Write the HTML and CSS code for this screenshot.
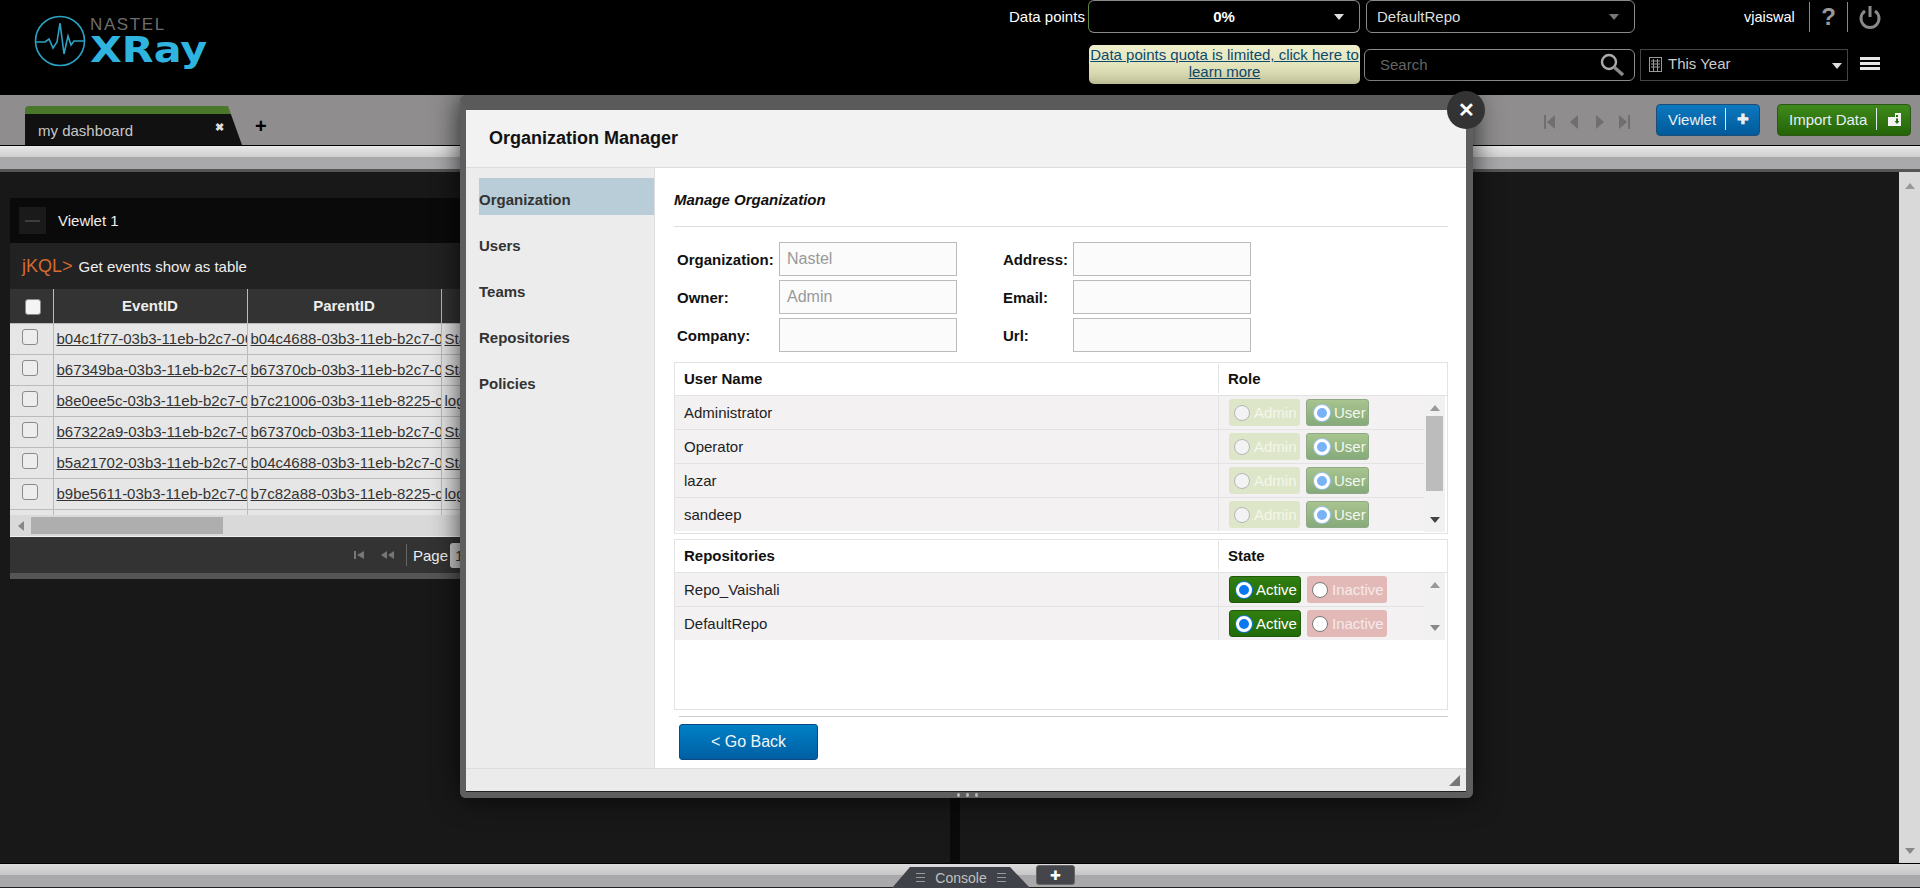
FILE: index.html
```html
<!DOCTYPE html>
<html lang="en">
<head>
    <meta charset="UTF-8" />
    <title>Nastel XRay</title>
    <link rel="stylesheet" href="styles.css">
</head>
<body>

<header class="topbar">
    <div class="logo">
        <svg class="logo-mark" width="52" height="52" viewBox="0 0 52 52">
            <circle cx="26" cy="26" r="24.5" fill="none" stroke="#2aa3c4" stroke-width="1.6"/>
            <path d="M2 27 H11 L15 24 L19 33 L23 27 L26 8 L30 39 L34 21 L37 30 L40 26 H50" fill="none" stroke="#2aa3c4" stroke-width="1.6"/>
        </svg>
        <div class="logo-text">
            <div class="logo-nastel">NASTEL</div>
            <div class="logo-xray">XRay</div>
        </div>
    </div>

    <div class="top-right">
        <div class="top-row">
            <span class="dp-label">Data points</span>
            <div class="drop dp-drop"><b>0%</b><i class="caret caret-white"></i></div>
            <div class="drop repo-drop"><span>DefaultRepo</span><i class="caret caret-gray"></i></div>
            <span class="username">vjaiswal</span>
            <span class="sep"></span>
            <span class="help">?</span>
            <span class="sep"></span>
            <svg class="power" width="24" height="24" viewBox="0 0 24 24">
                <path d="M7 6 A9 9 0 1 0 17 6" fill="none" stroke="#8a8a8a" stroke-width="3"/>
                <path d="M12 1 V12" stroke="#8a8a8a" stroke-width="3"/>
            </svg>
        </div>
        <div class="top-row second">
            <a class="quota">Data points quota is limited, click here to learn more</a>
            <div class="search">
                <span>Search</span>
                <svg width="26" height="24" viewBox="0 0 26 24">
                    <circle cx="10" cy="9" r="7" fill="none" stroke="#aaa" stroke-width="2.4"/>
                    <path d="M15 14 L24 22" stroke="#8a8a8a" stroke-width="3.4"/>
                </svg>
            </div>
            <div class="year">
                <svg width="13" height="16" viewBox="0 0 13 16">
                    <rect x="0.5" y="1.5" width="12" height="14" fill="none" stroke="#999"/>
                    <path d="M2 5 H11 M2 8 H11 M2 11 H11 M4.5 3 V15 M8.5 3 V15" stroke="#999"/>
                </svg>
                <span>This Year</span>
                <i class="caret caret-white"></i>
            </div>
            <div class="burger"><i></i><i></i><i></i></div>
        </div>
    </div>
</header>

<nav class="tabbar">
    <div class="tab">
        <span>my dashboard</span>
        <b class="tab-close">&#10006;</b>
    </div>
    <b class="tab-add">+</b>
    <div class="tab-tools">
        <svg class="pager-arrows" width="86" height="16" viewBox="0 0 86 16" fill="#6f6f6f">
            <path d="M0 1 H2 V15 H0 Z M11 1 V15 L3 8 Z"/>
            <path d="M34 1 V15 L26 8 Z"/>
            <path d="M52 1 V15 L60 8 Z"/>
            <path d="M75 1 V15 L83 8 Z M84 1 H86 V15 H84 Z"/>
        </svg>
        <button class="tool-btn blue">Viewlet<i></i><b>&#10010;</b></button>
        <button class="tool-btn green">Import Data<i></i>
            <svg width="13" height="13" viewBox="0 0 13 13">
                <path d="M0 4 H7 V0 H13 V13 H0 Z" fill="#f2f2f2"/>
                <path d="M8 2 H10 V4 H8 Z M8 5.5 H10 V8 H11.5 L9 11 L6.5 8 H8 Z" fill="#2a6a10"/>
            </svg>
        </button>
    </div>
</nav>
<div class="strip"></div>

<main class="workspace">
    <section class="left-pane">
        <div class="viewlet">
            <div class="viewlet-title">
                <span class="collapse"><i></i></span>
                <span>Viewlet 1</span>
            </div>
            <div class="jkql"><em>jKQL&gt;</em> Get events show as table</div>
            <div class="table-wrap">
                <table class="events">
                    <thead>
                    <tr>
                        <th class="chk"><span class="box box-head"></span></th>
                        <th>EventID</th>
                        <th>ParentID</th>
                        <th>Name</th>
                    </tr>
                    </thead>
                    <tbody>
                    <tr><td class="chk"><span class="box"></span></td><td><a>b04c1f77-03b3-11eb-b2c7-0610a1d4e2c8</a></td><td><a>b04c4688-03b3-11eb-b2c7-0610a1d4e2c8</a></td><td><a>Start</a></td></tr>
                    <tr><td class="chk"><span class="box"></span></td><td><a>b67349ba-03b3-11eb-b2c7-0610a1d4e2c8</a></td><td><a>b67370cb-03b3-11eb-b2c7-0610a1d4e2c8</a></td><td><a>Start</a></td></tr>
                    <tr><td class="chk"><span class="box"></span></td><td><a>b8e0ee5c-03b3-11eb-b2c7-0610a1d4e2c8</a></td><td><a>b7c21006-03b3-11eb-8225-c2f1a7d0b3e4</a></td><td><a>log</a></td></tr>
                    <tr><td class="chk"><span class="box"></span></td><td><a>b67322a9-03b3-11eb-b2c7-0610a1d4e2c8</a></td><td><a>b67370cb-03b3-11eb-b2c7-0610a1d4e2c8</a></td><td><a>Start</a></td></tr>
                    <tr><td class="chk"><span class="box"></span></td><td><a>b5a21702-03b3-11eb-b2c7-0610a1d4e2c8</a></td><td><a>b04c4688-03b3-11eb-b2c7-0610a1d4e2c8</a></td><td><a>Start</a></td></tr>
                    <tr><td class="chk"><span class="box"></span></td><td><a>b9be5611-03b3-11eb-b2c7-0610a1d4e2c8</a></td><td><a>b7c82a88-03b3-11eb-8225-c2f1a7d0b3e4</a></td><td><a>log</a></td></tr>
                    <tr><td class="chk"></td><td></td><td></td><td></td></tr>
                    </tbody>
                </table>
            </div>
            <div class="hscroll"><i class="arrow-left"></i><span class="hthumb"></span></div>
            <div class="pager">
                <svg width="40" height="10" viewBox="0 0 40 10" fill="#777">
                    <path d="M0 1 H2 V9 H0 Z M10 1 V9 L3 5 Z"/>
                    <path d="M33 1 V9 L27 5 Z M40 1 V9 L34 5 Z"/>
                </svg>
                <span class="pager-sep"></span>
                <span>Page</span>
                <span class="page-input">1</span>
            </div>
        </div>
    </section>
    <div class="splitter"></div>
    <section class="right-pane"></section>
    <div class="vscroll"><i class="arrow-up"></i><i class="arrow-down"></i></div>
</main>

<footer class="bottombar">
    <div class="console-tab"><span class="lines"></span><span>Console</span><span class="lines"></span></div>
    <button class="console-add">&#10010;</button>
</footer>

<div class="modal">
    <b class="modal-close">&#10005;</b>
    <div class="modal-head">Organization Manager</div>
    <div class="modal-body">
        <ul class="side">
            <li class="active">Organization</li>
            <li>Users</li>
            <li>Teams</li>
            <li>Repositories</li>
            <li>Policies</li>
        </ul>
        <div class="content">
            <h3>Manage Organization</h3>
            <div class="org-form">
                <label>Organization:</label><div class="field">Nastel</div>
                <label>Address:</label><div class="field"></div>
                <label>Owner:</label><div class="field">Admin</div>
                <label>Email:</label><div class="field"></div>
                <label>Company:</label><div class="field"></div>
                <label>Url:</label><div class="field"></div>
            </div>

            <div class="grid">
                <div class="grid-head"><span>User Name</span><span>Role</span></div>
                <div class="grid-body">
                    <div class="grid-rows">
                        <div class="grid-row"><span>Administrator</span><span class="pills"><span class="pill admin"><i class="radio off"></i>Admin</span><span class="pill user"><i class="radio on faded"></i>User</span></span></div>
                        <div class="grid-row"><span>Operator</span><span class="pills"><span class="pill admin"><i class="radio off"></i>Admin</span><span class="pill user"><i class="radio on faded"></i>User</span></span></div>
                        <div class="grid-row"><span>lazar</span><span class="pills"><span class="pill admin"><i class="radio off"></i>Admin</span><span class="pill user"><i class="radio on faded"></i>User</span></span></div>
                        <div class="grid-row"><span>sandeep</span><span class="pills"><span class="pill admin"><i class="radio off"></i>Admin</span><span class="pill user"><i class="radio on faded"></i>User</span></span></div>
                    </div>
                    <div class="grid-scroll"><i class="arrow-up"></i><span class="thumb"></span><i class="arrow-down dark"></i></div>
                </div>
            </div>

            <div class="grid repos">
                <div class="grid-head"><span>Repositories</span><span>State</span></div>
                <div class="grid-body">
                    <div class="grid-rows">
                        <div class="grid-row"><span>Repo_Vaishali</span><span class="pills"><span class="pill on-state"><i class="radio on"></i>Active</span><span class="pill off-state"><i class="radio off white"></i>Inactive</span></span></div>
                        <div class="grid-row"><span>DefaultRepo</span><span class="pills"><span class="pill on-state"><i class="radio on"></i>Active</span><span class="pill off-state"><i class="radio off white"></i>Inactive</span></span></div>
                    </div>
                    <div class="grid-scroll short"><i class="arrow-up"></i><i class="arrow-down"></i></div>
                </div>
            </div>

            <div class="actions">
                <button class="back">&lt; Go Back</button>
            </div>
        </div>
    </div>
    <div class="modal-foot">
        <svg width="11" height="11" viewBox="0 0 11 11"><path d="M0 11 L11 0 V11 Z" fill="#777"/></svg>
    </div>
</div>
<div class="dots"><i></i><i></i><i></i></div>

</body>
</html>
```

FILE: styles.css
```css
* {
    box-sizing: border-box;
}
html, body {
    margin: 0;
    height: 888px;
    overflow: hidden;
}
body {
    font-family: "Liberation Sans", Arial, sans-serif;
    font-size: 15px;
    background-color: #181818;
    display: flex;
    flex-direction: column;
}

/* top header */
.topbar {
    height: 95px;
    flex: none;
    background-color: #000;
    display: flex;
    justify-content: space-between;
    color: #fff;
}
.logo {
    display: flex;
    padding: 15px 0 0 34px;
}
.logo-mark {
    margin-right: 4px;
}
.logo-text {
    padding-top: 1px;
}
.logo-nastel {
    color: #6d6d6d;
    font-size: 17px;
    letter-spacing: 1.6px;
    line-height: 18px;
}
.logo-xray {
    color: #2fb4e0;
    font-family: "DejaVu Sans", sans-serif;
    font-weight: bold;
    font-size: 35px;
    line-height: 35px;
    margin-top: -1px;
    transform: scaleX(1.18);
    transform-origin: left center;
}
.top-right {
    width: 911px;
}
.top-row {
    display: flex;
    align-items: center;
    height: 33px;
}
.second {
    height: 39px;
    margin-top: 12px;
    padding-left: 80px;
}
.dp-label {
    width: 79px;
}
.drop {
    height: 33px;
    border: 1px solid #8a8a8a;
    border-radius: 6px;
    display: flex;
    align-items: center;
    position: relative;
}
.dp-drop {
    width: 272px;
    justify-content: center;
    border-left-color: #5d8a3c;
    margin-right: 6px;
}
.repo-drop {
    width: 269px;
    padding-left: 10px;
    color: #ddd;
}
.caret {
    position: absolute;
    right: 15px;
    top: 13px;
    border-left: 5px solid transparent;
    border-right: 5px solid transparent;
    border-top: 6px solid #ddd;
}
.caret-gray {
    border-top-color: #777;
}
.username {
    margin-left: 109px;
    width: 65px;
    font-size: 14.5px;
}
.sep {
    width: 1px;
    height: 30px;
    background-color: #888;
}
.help {
    width: 37px;
    text-align: center;
    color: #999;
    font-size: 24px;
    font-weight: bold;
}
.power {
    margin-left: 10px;
}
.quota {
    width: 271px;
    height: 39px;
    background: linear-gradient(#eeeecb, #dcdcb0);
    border-radius: 5px;
    color: #0b4a6e;
    text-decoration: underline;
    text-align: center;
    line-height: 17px;
    padding-top: 1px;
    margin-right: 4px;
}
.search {
    width: 271px;
    height: 32px;
    border: 1px solid #8a8a8a;
    border-radius: 6px;
    padding: 0 9px 0 15px;
    color: #666;
    display: flex;
    align-items: center;
    justify-content: space-between;
    margin-right: 5px;
}
.year {
    width: 208px;
    height: 32px;
    border: 1px solid #444;
    padding: 0 0 2px 8px;
    color: #ccc;
    display: flex;
    align-items: center;
    position: relative;
    margin-right: 12px;
}
.year span {
    margin-left: 6px;
}
.year .caret {
    right: 5px;
    top: 13px;
}
.burger {
    width: 20px;
}
.burger i {
    display: block;
    height: 3px;
    background-color: #e6e6e6;
    margin-bottom: 2px;
}

/* tab bar */
.tabbar {
    height: 51px;
    flex: none;
    background-color: #8f8d8d;
    border-bottom: 1px solid #000;
    display: flex;
    align-items: flex-end;
    padding-left: 25px;
}
.tab {
    width: 217px;
    height: 39px;
    background: linear-gradient(#4a7729 8px, #111 8px);
    clip-path: polygon(0 0, 203px 0, 100% 100%, 0 100%);
    border-radius: 4px 0 0 0;
    color: #c8c8c8;
    padding: 16px 0 0 13px;
    position: relative;
}
.tab-close {
    position: absolute;
    left: 190px;
    top: 15px;
    font-size: 11px;
    color: #ddd;
}
.tab-add {
    font-size: 20px;
    line-height: 20px;
    color: #000;
    margin: 0 0 9px 13px;
}
.tab-tools {
    margin-left: auto;
    padding-right: 9px;
    display: flex;
    align-items: center;
    align-self: flex-start;
    padding-top: 9px;
}
.pager-arrows {
    margin-right: 26px;
    margin-top: 4px;
}
.tool-btn {
    height: 32px;
    border-radius: 4px;
    color: #e8f0f4;
    font: 15px "Liberation Sans", Arial, sans-serif;
    display: flex;
    align-items: center;
    padding: 0 0 2px 11px;
}
.tool-btn i {
    width: 1px;
    height: 22px;
    background-color: #dfe9ee;
    margin: 0 11px 0 9px;
}
.tool-btn b {
    font-size: 14px;
}
.blue {
    width: 104px;
    background: linear-gradient(#0d78bf, #005a9a);
    border: 1px solid #1c4d78;
    margin-right: 17px;
}
.green {
    width: 134px;
    background: linear-gradient(#3f8a1a, #246408);
    border: 1px solid #2c5518;
}
.strip {
    height: 26px;
    flex: none;
    background: linear-gradient(#e8e8e8, #cfcfcf 11px, #a9a9ab 11px, #a9a9ab 23px, #555 23px);
}

/* main area */
.workspace {
    flex: 1;
    display: flex;
    min-height: 0;
}
.left-pane {
    width: 950px;
    padding: 26px 5px 0 10px;
}
.splitter {
    width: 10px;
    background-color: #0a0a0a;
}
.right-pane {
    flex: 1;
}
.vscroll {
    width: 21px;
    background-color: #d9d9d9;
    display: flex;
    flex-direction: column;
    justify-content: space-between;
    align-items: center;
    padding: 11px 0 9px;
}
.arrow-up, .arrow-down {
    display: block;
    border-left: 5px solid transparent;
    border-right: 5px solid transparent;
}
.arrow-up {
    border-bottom: 6px solid #999;
}
.arrow-down {
    border-top: 6px solid #888;
}
.arrow-down.dark {
    border-top-color: #444;
}

/* viewlet */
.viewlet {
    border-bottom: 6px solid #555;
}
.viewlet-title {
    height: 45px;
    background-color: #0a0a0a;
    color: #eee;
    display: flex;
    align-items: center;
    padding-left: 9px;
}
.collapse {
    width: 27px;
    height: 27px;
    background-color: #1a1a1a;
    margin-right: 12px;
    display: flex;
    align-items: center;
    justify-content: center;
}
.collapse i {
    width: 15px;
    height: 2px;
    background-color: #3d3d3d;
}
.jkql {
    height: 46px;
    background-color: #222;
    color: #eee;
    padding-left: 12px;
    display: flex;
    align-items: center;
}
.jkql em {
    font-style: normal;
    font-size: 18px;
    color: #d66a2f;
    margin-right: 6px;
}
.table-wrap {
    height: 226px;
    overflow: hidden;
    background-color: #e6e6e6;
}
.events {
    table-layout: fixed;
    border-collapse: collapse;
    width: 930px;
}
.events th {
    height: 34px;
    background-color: #333;
    color: #eee;
    border-right: 1px solid #bbb;
}
.events td {
    height: 31px;
    padding: 0 0 1px 3px;
    border-top: 1px solid #bbb;
    border-right: 1px solid #bbb;
    white-space: nowrap;
    overflow: hidden;
    color: #333;
}
.events th:nth-child(1) {
    width: 43px;
}
.events th:nth-child(2), .events th:nth-child(3) {
    width: 194px;
}
.events td.chk {
    text-align: center;
    padding: 0 3px 0 0;
}
.events a {
    text-decoration: underline;
}
.box {
    display: block;
    width: 16px;
    height: 16px;
    margin: 0 auto 3px;
    border: 1px solid #8a8a8a;
    border-radius: 3px;
    background-color: #ededed;
}
.box-head {
    margin: 3px 0 0 14px;
    background-color: #f4f4f4;
}
.hscroll {
    height: 22px;
    background-color: #d9d9d9;
    border-bottom: 1px solid #f0f0f0;
    display: flex;
    align-items: center;
    padding-left: 8px;
}
.arrow-left {
    border-top: 5px solid transparent;
    border-bottom: 5px solid transparent;
    border-right: 6px solid #888;
    margin-right: 7px;
}
.hthumb {
    width: 192px;
    height: 17px;
    background-color: #aeaeae;
}
.pager {
    height: 36px;
    background-color: #333;
    color: #eee;
    display: flex;
    align-items: center;
    padding-left: 344px;
}
.pager-sep {
    width: 1px;
    height: 22px;
    background-color: #666;
    margin: 0 6px 0 12px;
}
.page-input {
    margin-left: 2px;
    padding: 4px 12px 4px 5px;
    background-color: #ccc;
    border-radius: 3px;
    color: #333;
}

/* bottom bar */
.bottombar {
    height: 25px;
    flex: none;
    border-top: 1px solid #000;
    background: linear-gradient(#dcdcdc, #c6c6c6 11px, #a9a9ab 11px);
    border-bottom: 1px solid #222;
    display: flex;
    padding-left: 892px;
}
.console-tab {
    width: 138px;
    height: 21px;
    margin-top: 3px;
    background-color: #3f4248;
    clip-path: polygon(18px 0, 118px 0, 100% 100%, 0 100%);
    color: #c0c0c0;
    font-size: 14px;
    display: flex;
    align-items: center;
    justify-content: center;
    gap: 10px;
}
.lines {
    width: 9px;
    height: 9px;
    background: repeating-linear-gradient(#999 0, #999 1px, transparent 1px, transparent 4px);
}
.console-add {
    width: 39px;
    height: 20px;
    margin: 1px 0 0 6px;
    background-color: #44464b;
    border: 1px solid #666;
    border-radius: 3px;
    color: #fff;
    font-size: 13px;
    padding: 0;
}

/* organization manager dialog */
.modal {
    position: absolute;
    left: 460px;
    top: 95px;
    width: 1013px;
    height: 703px;
    border: 6px solid #5e5e5e;
    border-top: 15px solid #5a5a5a;
    border-right-width: 7px;
    border-radius: 6px;
    background-color: #fff;
    box-shadow: 0 0 28px rgba(0, 0, 0, 0.75);
    display: flex;
    flex-direction: column;
}
.modal-close {
    position: absolute;
    right: -19px;
    top: -19px;
    width: 38px;
    height: 38px;
    border-radius: 50%;
    background-color: #333;
    color: #fff;
    font-size: 20px;
    line-height: 38px;
    text-align: center;
}
.modal-head {
    height: 58px;
    flex: none;
    background-color: #f2f2f2;
    border-bottom: 1px solid #ddd;
    font-size: 18px;
    font-weight: bold;
    color: #111;
    padding: 18px 0 0 23px;
}
.modal-body {
    flex: 1;
    display: flex;
    min-height: 0;
}
.side {
    width: 190px;
    margin: 0;
    padding: 10px 0 0 13px;
    list-style: none;
    background-color: #ececec;
    border-right: 1px solid #ddd;
}
.side li {
    height: 37px;
    line-height: 43px;
    margin-bottom: 9px;
    font-weight: bold;
    color: #333;
}
.side li.active {
    background-color: #b8cdd8;
}
.content {
    flex: 1;
    padding: 0 18px 0 19px;
}
.content h3 {
    margin: 0 0 15px;
    height: 59px;
    line-height: 64px;
    font-size: 15px;
    font-style: italic;
    color: #111;
    border-bottom: 1px solid #ddd;
}
.org-form {
    display: grid;
    grid-template-columns: 102px 178px 116px 178px;
    grid-auto-rows: 34px;
    row-gap: 4px;
    padding-left: 3px;
    align-items: center;
}
.org-form label {
    font-weight: bold;
    color: #111;
}
.org-form label:nth-child(4n+3) {
    padding-left: 46px;
}
.field {
    height: 34px;
    border: 1px solid #bbb;
    background-color: #fbfbfb;
    padding: 0 7px;
    font-size: 16px;
    line-height: 32px;
    color: #999;
}
.grid {
    margin-top: 10px;
    height: 172px;
    border: 1px solid #e3e3e3;
    color: #222;
}
.repos {
    margin-top: 5px;
    height: 171px;
}
.grid-head {
    height: 33px;
    display: flex;
    align-items: center;
    font-weight: bold;
    color: #111;
    border-bottom: 1px solid #e3e3e3;
    padding-bottom: 2px;
}
.grid-head span:first-child, .grid-row > span:first-child {
    width: 543px;
    padding-left: 9px;
}
.grid-head span:last-child {
    border-left: 1px solid #e3e3e3;
    padding-left: 9px;
    height: 29px;
    line-height: 29px;
}
.grid-body {
    display: flex;
    margin-right: 2px;
}
.grid-rows {
    width: 749px;
}
.grid-row {
    height: 34px;
    background-color: #f3f1f2;
    border-bottom: 1px solid #e3e3e3;
    display: flex;
    align-items: center;
}
.grid-row:last-child {
    border-bottom: 0;
    height: 33px;
}
.pills {
    display: flex;
    gap: 6px;
    padding-left: 10px;
    border-left: 1px solid #e3e3e3;
    height: 100%;
    align-items: center;
}
.pill {
    height: 27px;
    border-radius: 3px;
    display: flex;
    align-items: center;
    padding-left: 5px;
    color: #fff;
}
.radio {
    width: 16px;
    height: 16px;
    border-radius: 50%;
    margin-right: 4px;
    display: block;
}
.radio.off {
    background-color: #f3f3f3;
    border: 1px solid #b5b5b5;
}
.radio.off.white {
    background-color: #fff;
    border-color: #777;
}
.radio.on {
    background-color: #0a78f0;
    border: 3px solid #fff;
    box-shadow: 0 0 0 1px #0a78f0;
}
.radio.on.faded {
    background-color: #7ab2f8;
    box-shadow: 0 0 0 1px #9dc4f5;
}
.admin {
    width: 71px;
    background-color: #dee6ca;
    color: #f4f6ea;
}
.user {
    width: 63px;
    background: linear-gradient(#a8c48f, #86aa7a);
    border: 1px solid #8fa987;
    padding-left: 7px;
    color: #f4f8f0;
}
.on-state {
    width: 72px;
    background: linear-gradient(#307e10, #236b09);
    border: 1px solid #1e5a08;
    padding-left: 6px;
}
.off-state {
    width: 80px;
    background-color: #e2b9b7;
    color: #f6eaea;
}
.grid-scroll {
    width: 21px;
    height: 136px;
    background-color: #f1f1f1;
    display: flex;
    flex-direction: column;
    align-items: center;
    justify-content: space-between;
    padding: 9px 0 9px;
}
.grid-scroll.short {
    height: 67px;
}
.thumb {
    width: 17px;
    height: 75px;
    background-color: #bcbcbc;
    margin-bottom: 22px;
}
.actions {
    margin: 6px 0 0 5px;
    border-top: 1px solid #ccc;
    padding-top: 7px;
}
.back {
    width: 139px;
    height: 36px;
    background: linear-gradient(#0080c6, #005fa3);
    border: 1px solid #0a4a80;
    border-radius: 3px;
    color: #f2f6fa;
    font: 16px "Liberation Sans", Arial, sans-serif;
}
.modal-foot {
    height: 24px;
    flex: none;
    background-color: #ebebeb;
    border-top: 1px solid #ddd;
    border-bottom: 1px solid #222;
    display: flex;
    justify-content: flex-end;
    align-items: flex-end;
    padding: 0 6px 5px 0;
}
.dots {
    position: absolute;
    left: 957px;
    top: 793px;
    display: flex;
    gap: 6px;
}
.dots i {
    width: 3px;
    height: 4px;
    background-color: #bbb;
    border-radius: 50%;
}
```
